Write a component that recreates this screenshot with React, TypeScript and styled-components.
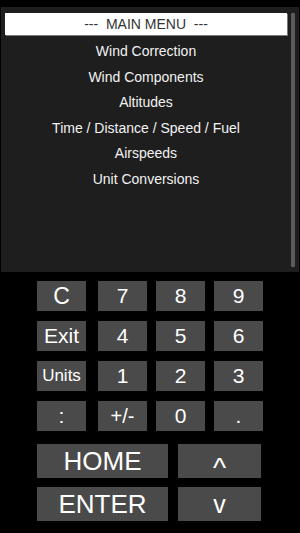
import { createGlobalStyle, styled } from 'styled-components'

const GlobalStyle = createGlobalStyle`
  html, body {
    margin: 0;
    padding: 0;
    background: #000000;
  }
  body {
    font-family: "Liberation Sans", Arial, sans-serif;
  }
`

const menuItems = [
  'Wind Correction',
  'Wind Components',
  'Altitudes',
  'Time / Distance / Speed / Fuel',
  'Airspeeds',
  'Unit Conversions',
]

type Key = { label: string; size: number }

const keys: Key[] = [
  { label: 'C', size: 23 },
  { label: '7', size: 21 },
  { label: '8', size: 21 },
  { label: '9', size: 21 },
  { label: 'Exit', size: 21 },
  { label: '4', size: 21 },
  { label: '5', size: 21 },
  { label: '6', size: 21 },
  { label: 'Units', size: 17 },
  { label: '1', size: 21 },
  { label: '2', size: 21 },
  { label: '3', size: 21 },
  { label: ':', size: 21 },
  { label: '+/-', size: 20 },
  { label: '0', size: 21 },
  { label: '.', size: 21 },
]

const App = () => {
  return (
    <>
      <GlobalStyle />
      <Page>
        <Screen>
          <MenuArea>
            <MenuHeader>---&nbsp;&nbsp;MAIN MENU&nbsp;&nbsp;---</MenuHeader>
            <MenuList>
              {menuItems.map((item) => (
                <MenuItem key={item}>{item}</MenuItem>
              ))}
            </MenuList>
          </MenuArea>
          <ScrollTrack>
            <ScrollThumb />
          </ScrollTrack>
        </Screen>
        <Keypad>
          <KeyGrid>
            {keys.map((k) => (
              <KeyButton key={k.label} fontSize={k.size}>
                {k.label}
              </KeyButton>
            ))}
          </KeyGrid>
          <NavGrid>
            <NavButton fontSize={26}>HOME</NavButton>
            <NavButton fontSize={28} dropBy={14}>^</NavButton>
            <NavButton fontSize={26}>ENTER</NavButton>
            <NavButton fontSize={25}>v</NavButton>
          </NavGrid>
        </Keypad>
      </Page>
    </>
  )
}

const Page = styled.div`
  width: 300px;
  height: 533px;
  background: #000000;
  padding-top: 7px;
  box-sizing: border-box;
  overflow: hidden;
`

const Screen = styled.div`
  margin-left: 1px;
  width: 298px;
  height: 265px;
  background: #1e1e1e;
  display: flex;
  padding: 6px 4px 5px 4px;
  box-sizing: border-box;
  gap: 4px;
`

const MenuArea = styled.div`
  flex: 1;
  display: flex;
  flex-direction: column;
`

const MenuHeader = styled.div`
  height: 22px;
  line-height: 22px;
  background: #ffffff;
  color: #333333;
  font-size: 14px;
  text-align: center;
  box-shadow: 1px 1px 0 #7a7a7a;
`

const MenuList = styled.ul`
  list-style: none;
  margin: 4px 0 0 0;
  padding: 0;
`

const MenuItem = styled.li`
  height: 25.6px;
  line-height: 25.6px;
  text-align: center;
  color: #f2f2f2;
  font-size: 14px;
`

const ScrollTrack = styled.div`
  width: 4px;
  display: flex;
`

const ScrollThumb = styled.div`
  flex: 1;
  background: #5c5c5c;
  border-radius: 1px;
`

const Keypad = styled.div`
  padding: 9px 0 0 37px;
`

const KeyGrid = styled.div`
  display: grid;
  grid-template-columns: 52px 49px 49px 49px;
  grid-auto-rows: 30px;
  column-gap: 9px;
  row-gap: 10px;
`

const KeyButton = styled.div<{ fontSize: number }>`
  width: 49px;
  background: #4a4a4a;
  color: #ffffff;
  font-size: ${({ fontSize }) => fontSize}px;
  display: flex;
  align-items: center;
  justify-content: center;
  user-select: none;
`

const NavGrid = styled.div`
  margin-top: 13px;
  display: grid;
  grid-template-columns: 131px 83px;
  grid-auto-rows: 34px;
  column-gap: 10px;
  row-gap: 9px;
`

const NavButton = styled.div<{ fontSize: number; dropBy?: number }>`
  background: #4a4a4a;
  color: #ffffff;
  font-size: ${({ fontSize }) => fontSize}px;
  padding-top: ${({ dropBy = 0 }) => dropBy}px;
  box-sizing: border-box;
  display: flex;
  align-items: center;
  justify-content: center;
  user-select: none;
`

export default App
